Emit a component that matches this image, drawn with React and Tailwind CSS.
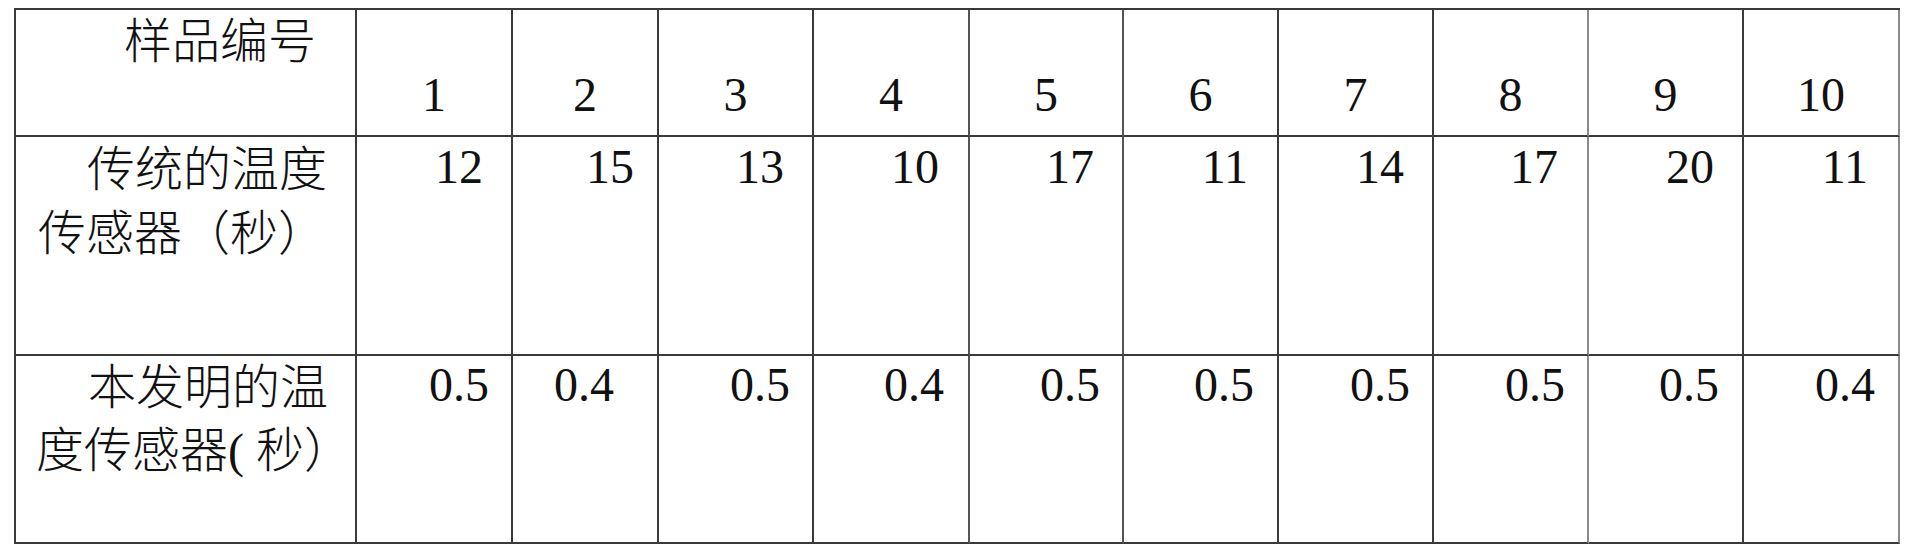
import React from "react";

const font = "font-[family-name:'Liberation_Serif','Noto_Sans_CJK_SC',serif]";

// one entry per number column: right border tone, row-2 and row-3 right padding
const columns = [
	{ head: "1", a: "12", b: "0.5", line: "border-r-[#3a3a3a]", pa: "pr-[28px]", pb: "pr-[22px]" },
	{ head: "2", a: "15", b: "0.4", line: "border-r-[#3a3a3a]", pa: "pr-[23px]", pb: "pr-[43px]" },
	{ head: "3", a: "13", b: "0.5", line: "border-r-[#3a3a3a]", pa: "pr-[28px]", pb: "pr-[22px]" },
	{ head: "4", a: "10", b: "0.4", line: "border-r-[#555]", pa: "pr-[29px]", pb: "pr-[24px]" },
	{ head: "5", a: "17", b: "0.5", line: "border-r-[#555]", pa: "pr-[28px]", pb: "pr-[22px]" },
	{ head: "6", a: "11", b: "0.5", line: "border-r-[#3a3a3a]", pa: "pr-[29px]", pb: "pr-[23px]" },
	{ head: "7", a: "14", b: "0.5", line: "border-r-[#3a3a3a]", pa: "pr-[28px]", pb: "pr-[22px]" },
	{ head: "8", a: "17", b: "0.5", line: "border-r-[#8a8a8a]", pa: "pr-[29px]", pb: "pr-[22px]" },
	{ head: "9", a: "20", b: "0.5", line: "border-r-[#3a3a3a]", pa: "pr-[28px]", pb: "pr-[23px]" },
	{ head: "10", a: "11", b: "0.4", line: "border-r-[#8a8a8a]", pa: "pr-[30px]", pb: "pr-[23px]" },
];

const cell = "border-r-2 border-b-2 border-[#3a3a3a]";

export default function App() {
	return (
		<div className={`w-[1920px] h-[558px] bg-white text-[#111] overflow-hidden ${font}`}>
			<div className="ml-[14px] mt-[8px] w-fit grid grid-cols-[341px_156px_146px_155px_156px_154px_155px_155px_155px_155px_156px] grid-rows-[127px_219px_188px] border-l-2 border-t-2 border-[#3a3a3a]">
				{/* header row */}
				<div className={cell}>
					<div className="pl-[108px] text-[48px] leading-[64px] font-light">样品编号</div>
				</div>
				{columns.map((c) => (
					<div key={"h" + c.head} className={`${cell} ${c.line} text-center`}>
						<div className="pt-[61px] text-[48px] leading-[48px]">{c.head}</div>
					</div>
				))}

				{/* traditional sensor */}
				<div className={cell}>
					<div className="pt-[1px] text-[48px] leading-[64px] font-light">
						<div className="pl-[71px]">传统的温度</div>
						<div className="pl-[22px]">传感器（秒）</div>
					</div>
				</div>
				{columns.map((c) => (
					<div key={"a" + c.head} className={`${cell} ${c.line} text-right ${c.pa}`}>
						<div className="pt-[6px] text-[48px] leading-[48px]">{c.a}</div>
					</div>
				))}

				{/* this invention */}
				<div className={cell}>
					<div className="text-[48px] leading-[63px] font-light">
						<div className="pl-[72px]">本发明的温</div>
						<div className="pl-[20px]">
							度传感器<span className="font-normal">(</span>
							<span className="ml-[12px]">秒）</span>
						</div>
					</div>
				</div>
				{columns.map((c) => (
					<div key={"b" + c.head} className={`${cell} ${c.line} text-right ${c.pb}`}>
						<div className="pt-[5px] text-[48px] leading-[48px]">{c.b}</div>
					</div>
				))}
			</div>
		</div>
	);
}
